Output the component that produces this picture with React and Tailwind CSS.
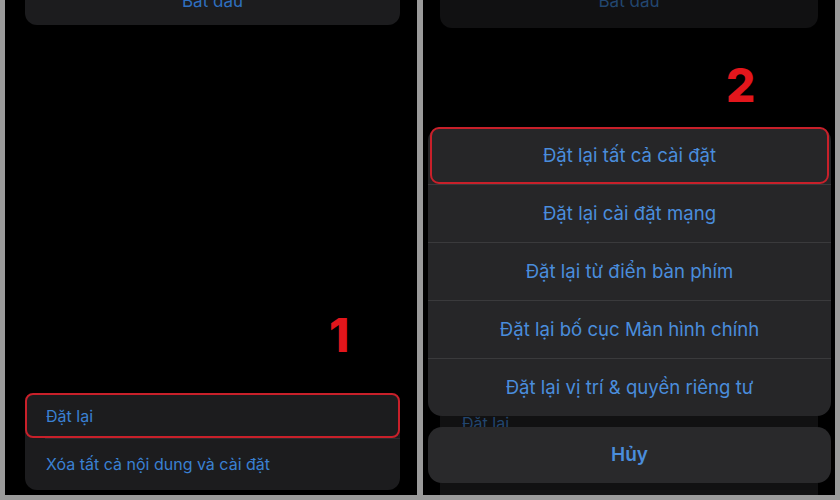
import React from 'react';

const font = { fontFamily: 'Inter, "Noto Sans", sans-serif' };

const sheetRows = [
  'Đặt lại tất cả cài đặt',
  'Đặt lại cài đặt mạng',
  'Đặt lại từ điển bàn phím',
  'Đặt lại bố cục Màn hình chính',
  'Đặt lại vị trí & quyền riêng tư',
];

const LeftScreen = () => (
  <div className="relative w-[412px] h-full bg-black flex flex-col">
    <div className="mx-[20px] mr-[17px] h-[25px] bg-[#1c1c1e] rounded-b-[12px] flex justify-center items-end overflow-hidden">
      <span className="text-[17px] leading-none text-[#2f6fbf] mb-[15px]">Bắt đầu</span>
    </div>

    <div className="absolute left-[324px] top-[312px] text-[46px] font-extrabold leading-none text-[#e3161c]">1</div>

    <div className="mt-auto mb-[5px] mx-[20px] mr-[17px] bg-[#1c1c1e] rounded-[12px] flex flex-col">
      <div className="h-[45px] border-2 border-[#c8202a] rounded-[8px] flex items-center pl-[19px]">
        <span className="text-[16px] text-[#3a80d2]">Đặt lại</span>
      </div>
      <div className="h-[1px] bg-[#2c2c2e] ml-[20px]" />
      <div className="h-[51px] flex items-center pl-[21px] pb-[2px]">
        <span className="text-[16px] text-[#3a80d2]">Xóa tất cả nội dung và cài đặt</span>
      </div>
    </div>
  </div>
);

const RightScreen = () => (
  <div className="relative w-[412px] h-full bg-black flex flex-col">
    {/* dimmed settings behind the sheet */}
    <div className="mx-[17px] h-[28px] bg-[#111112] rounded-b-[12px] flex justify-center items-end overflow-hidden">
      <span className="text-[17px] leading-none text-[#22466f] mb-[18px]">Bắt đầu</span>
    </div>
    <div className="mt-auto mx-[17px] h-[102px] bg-[#111112] rounded-t-[12px] flex flex-col pl-[22px] pt-[18px]">
      <span className="text-[16px] text-[#22466f]">Đặt lại</span>
    </div>

    <div className="absolute left-[303px] top-[62px] text-[46px] font-extrabold leading-none text-[#e3161c]">2</div>

    {/* action sheet */}
    <div className="absolute left-[5px] right-[4px] top-[127px] flex flex-col">
      <div className="bg-[#262628] rounded-[14px] flex flex-col">
        {sheetRows.map((row, i) => (
          <React.Fragment key={row}>
            {i > 0 && <div className="h-[1px] bg-[#3a3a3c]" />}
            <div
              className={`h-[57px] flex items-center justify-center ${
                i === 0 ? 'border-2 border-[#c8202a] rounded-[9px] mx-[2px]' : ''
              }`}
            >
              <span className="text-[18.6px] text-[#4a8ddc]">{row}</span>
            </div>
          </React.Fragment>
        ))}
      </div>
      <div className="mt-[11px] h-[56px] bg-[#29292b] rounded-[14px] flex items-center justify-center">
        <span className="text-[19px] font-semibold text-[#4a8ddc]">Hủy</span>
      </div>
    </div>
  </div>
);

export default function App() {
  return (
    <div className="w-[840px] h-[500px] bg-[#9b9b9b] flex gap-[6px] px-[5px] pb-[5px] overflow-hidden" style={font}>
      <LeftScreen />
      <RightScreen />
    </div>
  );
}
